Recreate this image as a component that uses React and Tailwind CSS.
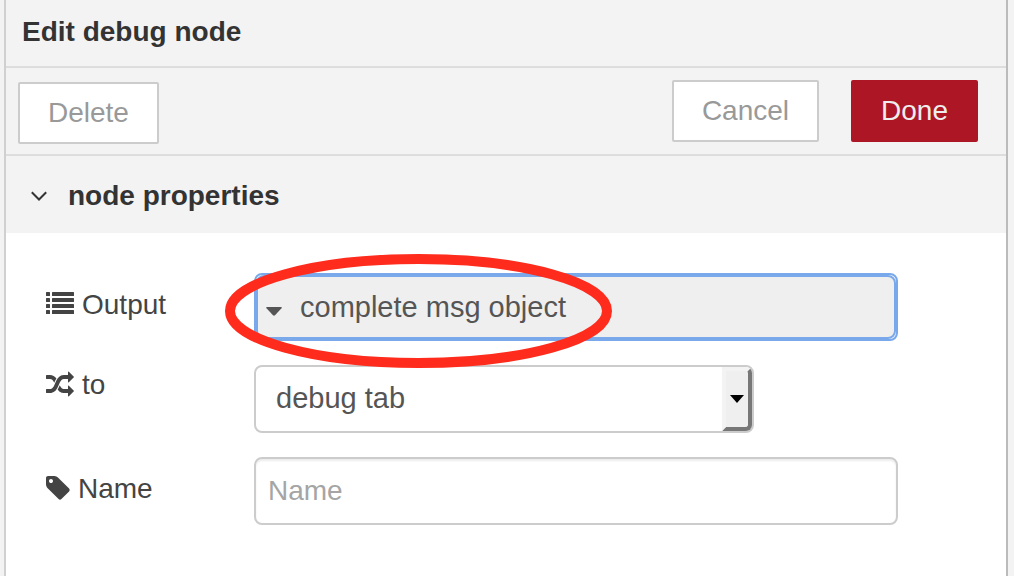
import { useState } from "react";

const RANDOM_PATH =
  "M666 481q-60 92-137 273-22-45-37-72.5t-40.5-63.5-51-56.5-63-35-81.5-14.5h-224q-14 0-23-9t-9-23v-192q0-14 9-23t23-9h224q250 0 410 225zm1126 799q0 14-9 23l-320 320q-9 9-23 9-13 0-22.5-9.5t-9.5-22.5v-192q-32 0-85 .5t-81 1-73-1-71-5-64-10.5-63-18.5-58-28.5-59-40-55-53.5-56-69.5q59-93 136-273 22 45 37 72.5t40.5 63.5 51 56.5 63 35 81.5 14.5h256v-192q0-14 9-23t23-9q12 0 24 10l319 319q9 9 9 23zm0-896q0 14-9 23l-320 320q-9 9-23 9-13 0-22.5-9.5t-9.5-22.5v-192h-256q-48 0-87 15t-69 45-51 61.5-45 77.5q-32 62-78 171-29 66-49.5 111t-54 105-64 100-74 83-90 68.5-106.5 42-128 16.5h-224q-14 0-23-9t-9-23v-192q0-14 9-23t23-9h224q48 0 87-15t69-45 51-61.5 45-77.5q32-62 78-171 29-66 49.5-111t54-105 64-100 74-83 90-68.5 106.5-42 128-16.5h256v-192q0-14 9-23t23-9q12 0 24 10l319 319q9 9 9 23z";
const TAG_PATH =
  "M576 448q0-53-37.5-90.5t-90.5-37.5-90.5 37.5-37.5 90.5 37.5 90.5 90.5 37.5 90.5-37.5 37.5-90.5zm1067 576q0 53-37 90l-491 492q-39 37-91 37-53 0-90-37l-715-716q-38-37-64.5-101t-26.5-117v-416q0-52 38-90t90-38h416q53 0 117 26.5t102 64.5l715 714q37 39 37 91z";

function ListIcon() {
  return (
    <svg viewBox="0 0 28 28" className="size-7 shrink-0" fill="currentColor" aria-hidden="true">
      {[1, 7, 13, 19].map((y) => (
        <g key={y}>
          <rect x="0" y={y} width="4" height="4" rx="0.5" />
          <rect x="6" y={y} width="22" height="4" rx="0.5" />
        </g>
      ))}
    </svg>
  );
}

function GlyphIcon({ path, viewBox = "0 0 1792 1792", className }) {
  return (
    <svg viewBox={viewBox} className={className} fill="currentColor" aria-hidden="true">
      <path d={path} />
    </svg>
  );
}

function ToolButton({ primary, className = "", children }) {
  return (
    <button
      type="button"
      className={`h-[62px] rounded-xs border-2 px-7 leading-8 ${
        primary
          ? "border-[#ad1625] bg-[#ad1625] text-[#eeeeee]"
          : "border-[#cccccc] bg-white text-[#999999]"
      } ${className}`}
    >
      {children}
    </button>
  );
}

const labelClass = "flex w-[208px] shrink-0 items-center gap-2 leading-8";

export default function App() {
  const [open, setOpen] = useState(true);
  const [target, setTarget] = useState("debug tab");
  const [name, setName] = useState("");

  return (
    <div className="flex min-h-screen bg-[#f3f3f3] pl-1 pr-1.5 font-['Liberation_Sans',Arial,sans-serif] text-[28px] text-[#444444]">
      <main className="flex flex-1 flex-col border-l-2 border-r-2 border-l-[#d0d0d0] border-r-[#bbbbbb] bg-white">
        <header className="border-b-2 border-[#dddddd] bg-[#f3f3f3] px-4 pt-4 pb-[18px]">
          <h1 className="font-bold leading-8 text-[#333333]">Edit debug node</h1>
        </header>

        <div className="flex items-start justify-between border-b-2 border-[#dddddd] bg-[#f3f3f3] pt-3 pr-7 pb-2.5 pl-3">
          <ToolButton className="mt-0.5">Delete</ToolButton>
          <div className="flex gap-8">
            <ToolButton>Cancel</ToolButton>
            <ToolButton primary>Done</ToolButton>
          </div>
        </div>

        <h2 className="bg-[#f3f3f3] font-bold text-[#333333]">
          <button
            type="button"
            aria-expanded={open}
            onClick={() => setOpen(!open)}
            className="flex w-full items-center gap-5 pt-6 pr-6 pb-[21px] pl-6 leading-8"
          >
            <svg viewBox="0 0 18 18" className="size-[18px]" fill="none" stroke="currentColor" strokeWidth="2" aria-hidden="true">
              <path d="M1.8 5.3L9 12.5L16.2 5.3" />
            </svg>
            <span>node properties</span>
          </button>
        </h2>

        {open && (
          <form className="flex flex-col gap-6 pt-10 pr-[108px] pb-12 pl-10">
            <div className="flex items-start">
              <label htmlFor="output" className={`${labelClass} pt-4`}>
                <ListIcon />
                Output
              </label>
              <div className="relative z-10 flex-1">
                <div className="rounded-lg border-2 border-[#79a9ea] bg-white">
                  <button
                    id="output"
                    type="button"
                    className="flex h-16 w-full items-center gap-[18px] rounded-lg border-2 border-[#79a9ea] bg-[#efefef] px-2 text-left text-[29px] leading-8 text-[#555555]"
                  >
                    <svg viewBox="0 0 16 9" className="mt-2 h-[9px] w-4" fill="currentColor" aria-hidden="true">
                      <path d="M1 0H15Q16.6 0 15.5 1.3L9 8.3Q8 9.2 7 8.3L.5 1.3Q-.6 0 1 0z" />
                    </svg>
                    <span>complete msg object</span>
                  </button>
                </div>
                <svg
                  viewBox="0 0 388 116"
                  className="pointer-events-none absolute -top-5 -left-[30px] h-[116px] w-[388px]"
                  fill="none"
                  aria-hidden="true"
                >
                  <ellipse cx="194.5" cy="58" rx="188.5" ry="52" stroke="#ff2b1c" strokeWidth="10" />
                </svg>
              </div>
            </div>

            <div className="flex items-start">
              <label htmlFor="target" className={`${labelClass} pt-1`}>
                <GlyphIcon path={RANDOM_PATH} className="size-7 shrink-0" />
                to
              </label>
              <div className="relative w-[500px]">
                <select
                  id="target"
                  value={target}
                  onChange={(e) => setTarget(e.target.value)}
                  className="h-[68px] w-full appearance-none rounded-lg border-2 border-[#cccccc] bg-white pr-10 pl-5 text-[29px] text-[#555555]"
                >
                  <option>debug tab</option>
                </select>
                <span
                  aria-hidden="true"
                  className="pointer-events-none absolute top-0.5 right-0.5 bottom-0.5 flex w-[30px] items-center justify-center rounded-r-md border-4 border-t-[#f3f3f3] border-r-[#777777] border-b-[#777777] border-l-[#f3f3f3] bg-[#efefef] text-black"
                >
                  <svg viewBox="0 0 14 8" className="h-2 w-[14px] shrink-0" fill="currentColor">
                    <path d="M0 0h14L7 8z" />
                  </svg>
                </span>
              </div>
            </div>

            <div className="flex items-start">
              <label htmlFor="name" className={`${labelClass} pt-4`}>
                <GlyphIcon path={TAG_PATH} viewBox="128 64 1792 1792" className="-mr-1 size-7 shrink-0" />
                Name
              </label>
              <input
                id="name"
                type="text"
                placeholder="Name"
                value={name}
                onChange={(e) => setName(e.target.value)}
                className="h-[68px] min-w-0 flex-1 rounded-lg border-2 border-[#cccccc] bg-white px-3 text-[#555555] shadow-[inset_0_2px_2px_rgba(0,0,0,0.075)] placeholder:text-[#a5a5a5]"
              />
            </div>
          </form>
        )}
      </main>
    </div>
  );
}
